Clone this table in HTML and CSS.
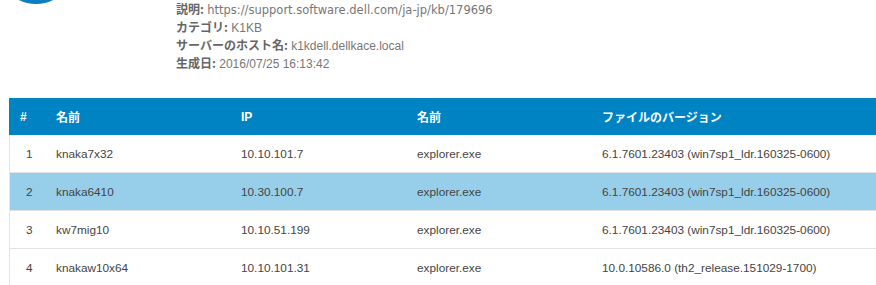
FILE: index.html
```html
<!DOCTYPE html>
<html lang="ja">
<head>
<meta charset="utf-8">
<link rel="stylesheet" href="styles.css">
</head>
<body>
<div class="top">
  <svg class="logo" width="80" height="4" viewBox="4 76 80 4" aria-hidden="true">
    <circle cx="40" cy="42" r="36" fill="none" stroke="#0b7ec4" stroke-width="4"/>
  </svg>
  <div class="info">
    <div class="line"><span class="lbl">説明:</span> <span class="val url">https://support.software.dell.com/ja-jp/kb/179696</span></div>
    <div class="line"><span class="lbl">カテゴリ:</span> <span class="val">K1KB</span></div>
    <div class="line"><span class="lbl">サーバーのホスト名:</span> <span class="val">k1kdell.dellkace.local</span></div>
    <div class="line"><span class="lbl">生成日:</span> <span class="val">2016/07/25 16:13:42</span></div>
  </div>
</div>
<div class="table">
  <div class="row head">
    <div class="c num">#</div>
    <div class="c">名前</div>
    <div class="c">IP</div>
    <div class="c">名前</div>
    <div class="c">ファイルのバージョン</div>
  </div>
  <div class="row">
    <div class="c num">1</div>
    <div class="c">knaka7x32</div>
    <div class="c">10.10.101.7</div>
    <div class="c">explorer.exe</div>
    <div class="c">6.1.7601.23403 (win7sp1_ldr.160325-0600)</div>
  </div>
  <div class="row hl">
    <div class="c num">2</div>
    <div class="c">knaka6410</div>
    <div class="c">10.30.100.7</div>
    <div class="c">explorer.exe</div>
    <div class="c">6.1.7601.23403 (win7sp1_ldr.160325-0600)</div>
  </div>
  <div class="row">
    <div class="c num">3</div>
    <div class="c">kw7mig10</div>
    <div class="c">10.10.51.199</div>
    <div class="c">explorer.exe</div>
    <div class="c">6.1.7601.23403 (win7sp1_ldr.160325-0600)</div>
  </div>
  <div class="row">
    <div class="c num">4</div>
    <div class="c">knakaw10x64</div>
    <div class="c">10.10.101.31</div>
    <div class="c">explorer.exe</div>
    <div class="c">10.0.10586.0 (th2_release.151029-1700)</div>
  </div>
</div>
</body>
</html>
```

FILE: styles.css
```css
html, body {
  margin: 0;
  padding: 0;
  background: #ffffff;
}
body {
  font-family: "Liberation Sans", "Noto Sans CJK JP", sans-serif;
  font-size: 12px;
  color: #555555;
  overflow: hidden;
}
.top {
  display: flex;
  align-items: flex-start;
  height: 98px;
}
.logo {
  display: block;
  flex: none;
}
.info {
  margin-left: 96px;
}
.line {
  height: 18px;
  line-height: 18px;
  white-space: nowrap;
}
.lbl {
  font-family: "Noto Sans CJK JP", sans-serif;
  font-weight: 700;
  color: #666666;
}
.val {
  color: #777777;
}
.val.url {
  font-family: "DejaVu Sans", sans-serif;
  font-size: 11.5px;
}
.table {
  margin-left: 9px;
  border-left: 1px solid #e6e6e6;
}
.row {
  display: grid;
  grid-template-columns: 35px 185px 176px 185px 1fr;
  height: 38px;
  align-items: center;
  border-bottom: 1px solid #e2e2e2;
  box-sizing: border-box;
  color: #444444;
  font-size: 11.8px;
}
.row.head {
  height: 37px;
  background: #0083c2;
  color: #ffffff;
  font-weight: 700;
  font-size: 12px;
  border-bottom: none;
  margin-left: -1px;
  padding-left: 1px;
}
.row.hl {
  background: #97cfea;
}
.c {
  padding-left: 11px;
  white-space: nowrap;
}
.row .num {
  padding-left: 16px;
}
.row.head .num {
  padding-left: 10px;
}
```
